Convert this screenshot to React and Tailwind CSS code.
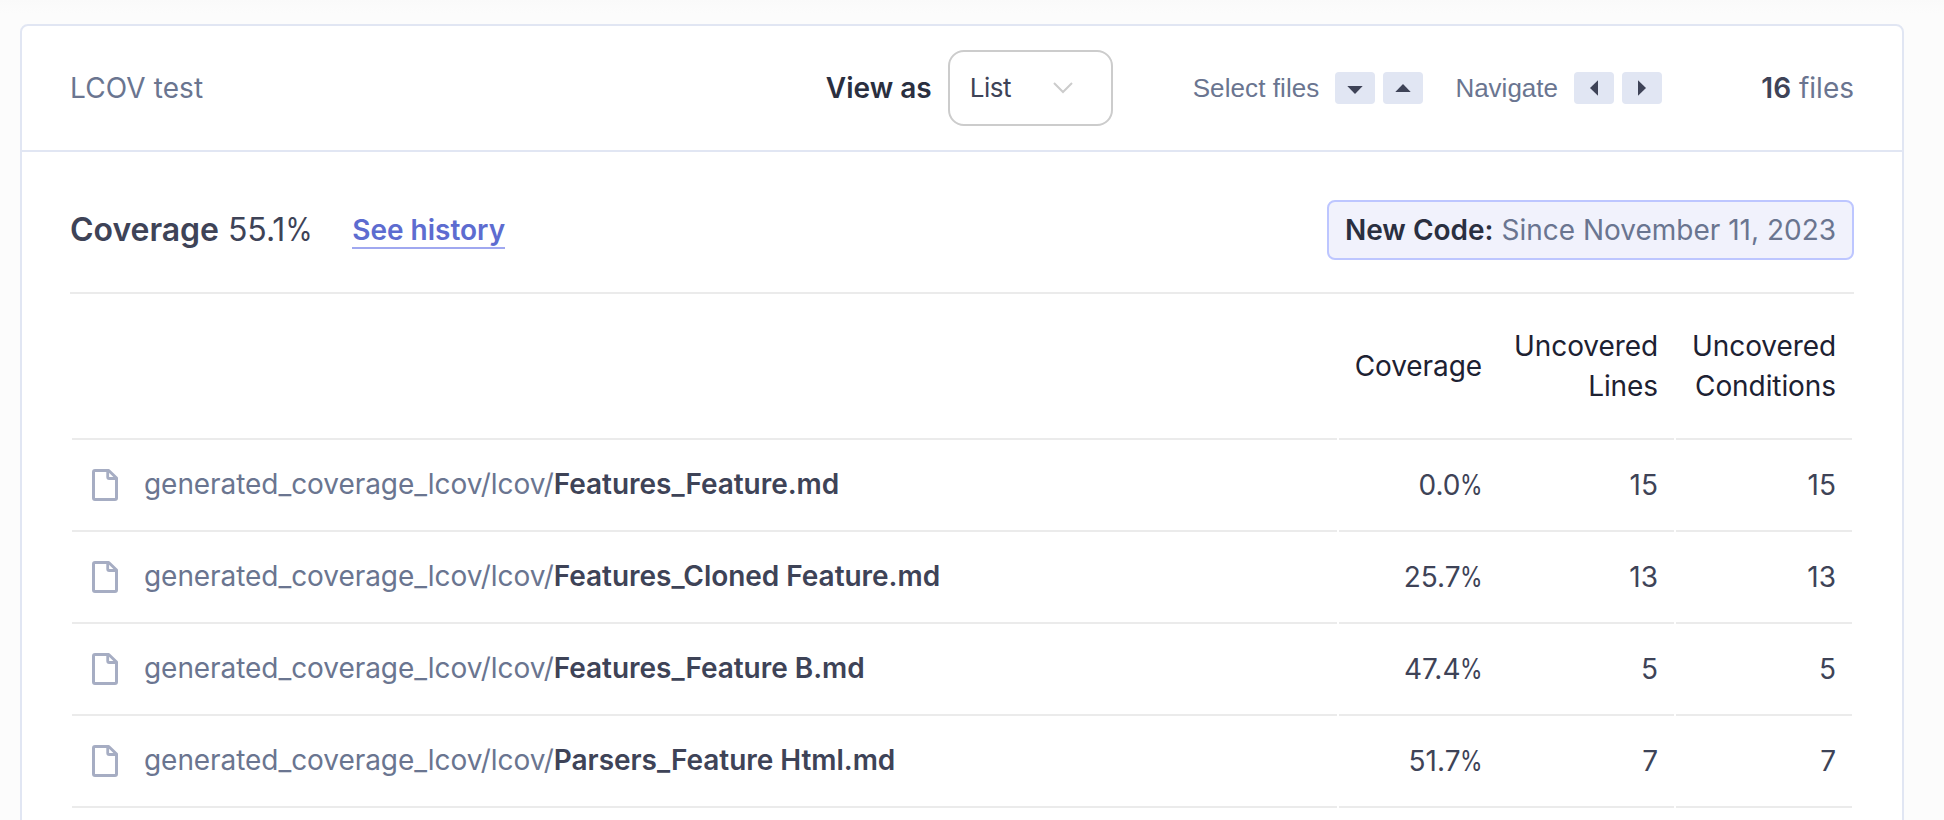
import React from "react";

const rows = [
  { name: "Features_Feature.md", coverage: "0.0", lines: 15, conditions: 15 },
  { name: "Features_Cloned Feature.md", coverage: "25.7", lines: 13, conditions: 13 },
  { name: "Features_Feature B.md", coverage: "47.4", lines: 5, conditions: 5 },
  { name: "Parsers_Feature Html.md", coverage: "51.7", lines: 7, conditions: 7 },
];

function Key({ points }) {
  return (
    <span className="flex h-8 w-10 items-center justify-center rounded-[4px] bg-[#e1e6f3]">
      <svg width="32" height="32" viewBox="0 0 32 32" fill="#3e4357">
        <polygon points={points} />
      </svg>
    </span>
  );
}

function FileIcon() {
  return (
    <svg width="32" height="32" viewBox="0 0 32 32" fill="none" stroke="#a6adc3" className="shrink-0">
      <path d="M7 1.5H20.7L28.5 9V29a1.5 1.5 0 0 1-1.5 1.5H7A1.5 1.5 0 0 1 5.5 29V3A1.5 1.5 0 0 1 7 1.5Z" strokeWidth="3" strokeLinejoin="round" />
      <path d="M19.7 2V8a1.5 1.5 0 0 0 1.5 1.5H28" strokeWidth="2.8" />
    </svg>
  );
}

function Header() {
  return (
    <header className="flex h-[126px] items-center border-b-2 border-[#e1e6f3] px-12 text-[28px] text-[#6a7590]">
      <div className="flex-1 tracking-[0.1px]">LCOV test</div>
      <div className="flex items-center">
        <span className="mr-4 font-semibold text-[#2a2f40]">View as</span>
        <div className="flex h-[76px] w-[165px] items-center justify-between rounded-2xl border-2 border-[#cccccc] bg-white pl-5 pr-[38px] text-[26px] text-[#3e4357]">
          <span className="pb-px tracking-[-0.5px]">List</span>
          <svg width="20" height="12" viewBox="0 0 20 12" fill="none" stroke="#cccccc" strokeWidth="2">
            <path d="M1 1L10 10L19 1" />
          </svg>
        </div>
      </div>
      <div className="ml-20 flex items-center font-['Liberation_Sans',sans-serif] text-[26px]">
        <span className="mr-4 tracking-[0.08px]">Select files</span>
        <div className="flex gap-2">
          <Key points="8.3,14 23.7,14 16,22" />
          <Key points="8.3,20 23.7,20 16,12" />
        </div>
        <span className="ml-8 mr-4">Navigate</span>
        <div className="flex gap-2">
          <Key points="20,8.3 20,23.7 12,16" />
          <Key points="12,8.3 12,23.7 20,16" />
        </div>
      </div>
      <div className="w-[192px] text-right">
        <b className="font-semibold text-[#3e4357]">16</b> files
      </div>
    </header>
  );
}

function TableRow({ className, cells }) {
  return (
    <div className={"grid grid-cols-[1fr_335px_176px] gap-x-[2px] " + className}>
      <div className="flex items-center border-b-2 border-[#ebebeb] pl-4">{cells[0]}</div>
      <div className="flex items-center border-b-2 border-[#ebebeb] text-right">
        <div className="w-[159px] pr-4">{cells[1]}</div>
        <div className="w-[176px] pr-4">{cells[2]}</div>
      </div>
      <div className="flex items-center justify-end border-b-2 border-[#ebebeb] pr-4 text-right">{cells[3]}</div>
    </div>
  );
}

export default function App() {
  return (
    <div className="h-[820px] w-[1944px] overflow-hidden bg-[#fcfcfc] bg-[linear-gradient(#fafafa,#fcfcfc_14px)] pl-5 pt-6 font-['Inter',sans-serif]">
      <main className="h-[900px] w-[1884px] rounded-lg border-2 border-[#e1e6f3] bg-white">
        <Header />
        <section className="px-12 pt-12">
          <div className="flex h-[94px] items-start justify-between border-b-2 border-[#ebebeb]">
            <div className="flex h-[60px] items-center text-[32px] text-[#3e4357]">
              <span className="tracking-[-0.04px]">
                <b className="font-semibold">Coverage</b> 55.1
                <span className="-ml-[4.5px] inline-block origin-right scale-x-[0.86]">%</span>
              </span>
              <a className="ml-10 border-b-2 border-[#a0a8f0] pt-0.5 text-[28px] font-semibold leading-[34px] text-[#5d6cd0]">See history</a>
            </div>
            <div className="flex h-[60px] items-center whitespace-pre rounded-lg border-2 border-[#bdc6ff] bg-[#f1f2fc] px-4 text-[28px] text-[#6a7590]">
              <b className="font-semibold text-[#2a2f40]">New Code:</b> Since November 11, 2023
            </div>
          </div>
          <div className="px-[2px] text-[28px] leading-[40px] text-[#3e4357]">
            <TableRow
              className="h-[146px] tracking-[-0.08px] text-[#1d2132]"
              cells={["", "Coverage", <>Uncovered<br />Lines</>, <>Uncovered<br />Conditions</>]}
            />
            {rows.map((r) => (
              <TableRow
                key={r.name}
                className="h-[92px]"
                cells={[
                  <div className="flex items-center gap-6">
                    <FileIcon />
                    <span className="whitespace-nowrap pb-0.5 text-[#6a7590]">
                      <span className="tracking-[-0.06px]">generated_coverage_lcov/lcov/</span>
                      <b className="font-semibold tracking-[-0.04px] text-[#3e4357]">{r.name}</b>
                    </span>
                  </div>,
                  <>
                    {r.coverage}
                    <span className="-ml-[6px] inline-block origin-right scale-x-[0.82]">%</span>
                  </>,
                  r.lines,
                  r.conditions,
                ]}
              />
            ))}
          </div>
        </section>
      </main>
    </div>
  );
}
